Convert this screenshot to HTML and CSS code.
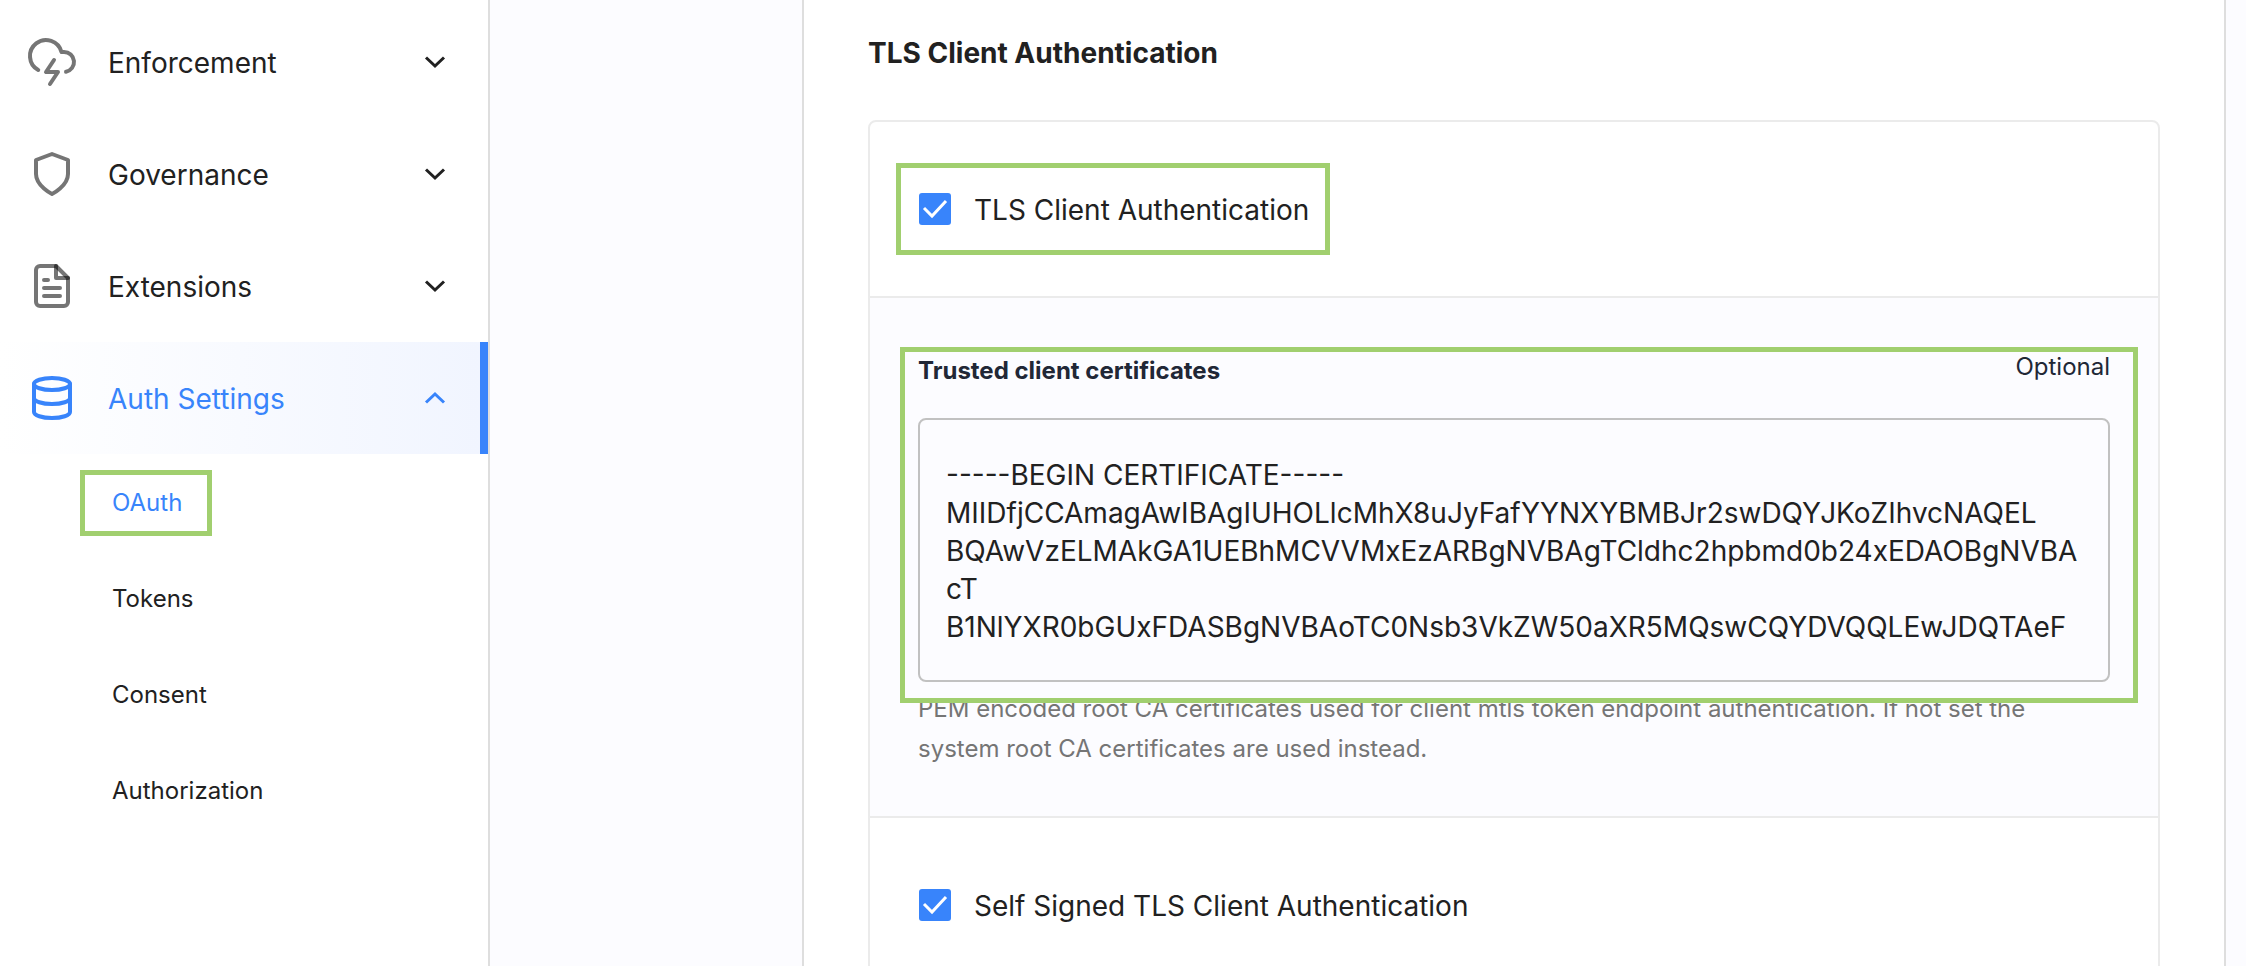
FILE: index.html
```html
<!DOCTYPE html>
<html lang="en">
<head>
<meta charset="utf-8">
<title>Auth Settings</title>
<link rel="stylesheet" href="styles.css">
</head>
<body>
<div class="app">
  <nav class="sidebar" aria-label="Main">
    <button class="nav-item" type="button">
      <svg class="nav-icon" viewBox="0 0 24 24"><path d="M19 16.900A5 5 0 0 0 18 7h-1.260a8 8 0 1 0-11.620 9"/><path d="M13 11l-4 6h6l-4 6"/></svg>
      <span class="nav-label">Enforcement</span>
      <svg class="chevron" viewBox="0 0 20 12"><path d="M1 1.500 10 10l9-8.500"/></svg>
    </button>
    <button class="nav-item" type="button">
      <svg class="nav-icon" viewBox="0 0 24 24"><path d="M12 22s8-4 8-10V5l-8-3-8 3v7c0 6 8 10 8 10z"/></svg>
      <span class="nav-label">Governance</span>
      <svg class="chevron" viewBox="0 0 20 12"><path d="M1 1.500 10 10l9-8.500"/></svg>
    </button>
    <button class="nav-item" type="button">
      <svg class="nav-icon" viewBox="0 0 24 24"><path d="M14 2H6a2 2 0 0 0-2 2v16a2 2 0 0 0 2 2h12a2 2 0 0 0 2-2V8z"/><path d="M14 2v6h6"/><path d="M16 13H8M16 17H8M10 9H8"/></svg>
      <span class="nav-label">Extensions</span>
      <svg class="chevron" viewBox="0 0 20 12"><path d="M1 1.500 10 10l9-8.500"/></svg>
    </button>
    <button class="nav-item nav-item-active" type="button" aria-expanded="true">
      <svg class="nav-icon" viewBox="0 0 24 24"><ellipse cx="12" cy="5" rx="9" ry="3"/><path d="M21 12c0 1.660-4 3-9 3s-9-1.340-9-3M3 5v14c0 1.660 4 3 9 3s9-1.340 9-3V5"/></svg>
      <span class="nav-label">Auth Settings</span>
      <svg class="chevron" viewBox="0 0 20 12"><path d="M1 10.500 10 2l9 8.500"/></svg>
    </button>
    <ul class="subnav">
      <li><a class="subnav-link subnav-link-active" href="#oauth">OAuth</a></li>
      <li><a class="subnav-link" href="#tokens">Tokens</a></li>
      <li><a class="subnav-link" href="#consent">Consent</a></li>
      <li><a class="subnav-link" href="#authorization">Authorization</a></li>
    </ul>
  </nav>
  <main class="content">
    <h2 class="section-title">TLS Client Authentication</h2>
    <section class="card">
      <div class="card-row">
        <label class="check check-marked"><input class="check-box" type="checkbox" checked><span class="check-text">TLS Client Authentication</span></label>
      </div>
      <div class="card-row card-row-field">
        <div class="field">
          <div class="field-head">
            <label class="field-label" for="certs">Trusted client certificates</label>
            <span class="field-optional">Optional</span>
          </div>
          <textarea class="field-input" id="certs" rows="5" spellcheck="false" aria-describedby="certs-help">-----BEGIN CERTIFICATE-----
MIIDfjCCAmagAwIBAgIUHOLlcMhX8uJyFafYYNXYBMBJr2swDQYJKoZIhvcNAQEL
BQAwVzELMAkGA1UEBhMCVVMxEzARBgNVBAgTCldhc2hpbmd0b24xEDAOBgNVBAcT
B1NlYXR0bGUxFDASBgNVBAoTC0Nsb3VkZW50aXR5MQswCQYDVQQLEwJDQTAeF</textarea>
          <p class="field-help" id="certs-help">PEM encoded root CA certificates used for client mtls token endpoint authentication. If not set the system root CA certificates are used instead.</p>
        </div>
      </div>
      <div class="card-row">
        <label class="check"><input class="check-box" type="checkbox" checked><span class="check-text">Self Signed TLS Client Authentication</span></label>
      </div>
    </section>
  </main>
</div>
</body>
</html>
```
FILE: styles.css
```css
* {
  box-sizing: border-box;
}

body {
  margin: 0;
  background: #fcfcff;
  color: #212121;
  font-family: Inter, "Liberation Sans", sans-serif;
  font-size: 28px;
}

.app {
  display: flex;
  height: 100vh;
  overflow: hidden;
}

.sidebar {
  flex: 0 0 490px;
  padding-top: 6px;
  background: #fff;
  border-right: 2px solid #dedede;
}

.nav-item {
  display: flex;
  align-items: center;
  width: 100%;
  height: 112px;
  padding: 0 43px 0 28px;
  border: 0;
  background: none;
  color: inherit;
  font: inherit;
  text-align: left;
}

.nav-item-active {
  padding-right: 35px;
  border-right: 8px solid #3884fb;
  background: linear-gradient(to right, #fff, #f1f5ff);
  color: #3884fb;
}

.nav-icon {
  width: 48px;
  height: 48px;
  overflow: visible;
  fill: none;
  stroke: rgba(0, 0, 0, 0.54);
  stroke-width: 2;
  stroke-linecap: round;
  stroke-linejoin: round;
}

.nav-item-active .nav-icon {
  stroke: #3884fb;
}

.nav-label {
  flex: 1;
  margin-left: 32px;
  padding-top: 2px;
}

.chevron {
  width: 20px;
  height: 12px;
  overflow: visible;
  fill: none;
  stroke: currentColor;
  stroke-width: 3;
}

.subnav {
  margin: 0;
  padding: 1px 0 0;
  list-style: none;
  font-size: 24px;
}

.subnav li {
  display: flex;
  align-items: center;
  height: 96px;
  padding-left: 80px;
}

.subnav-link {
  padding: 16px 32px;
  color: inherit;
  line-height: 34px;
  text-decoration: none;
}

.subnav-link-active {
  padding: 11px 25px 11px 27px;
  border: 5px solid #a1cf6f;
  color: #3884fb;
}

.content {
  flex: 1;
  min-width: 0;
  margin: 0 20px 0 312px;
  padding: 33px 64px 0;
  background: #fff;
  border: solid #dedede;
  border-width: 0 2px;
}

.section-title {
  margin: 0 0 47px;
  font-size: 28px;
  font-weight: 700;
  line-height: 40px;
}

.card {
  border: 2px solid #ebebeb;
  border-radius: 8px;
}

.card-row {
  display: flex;
  align-items: center;
  min-height: 174px;
  padding: 0 49px;
}

.card-row-field {
  padding: 49px 20px 47px 30px;
  background: #fcfcff;
  border: solid #ebebeb;
  border-width: 2px 0;
}

.check {
  display: flex;
  align-items: center;
  gap: 23px;
}

.check-marked {
  margin-left: -23px;
  padding: 24px 16px 24px 18px;
  border: 5px solid #a1cf6f;
}

.check-text {
  padding-top: 2px;
  line-height: 32px;
}

.check-box {
  flex: none;
  width: 32px;
  height: 32px;
  margin: 0;
  appearance: none;
  border-radius: 3px;
  background: #3884fb url("data:image/svg+xml,%3Csvg xmlns='http://www.w3.org/2000/svg' viewBox='0 0 32 32'%3E%3Cpath d='M5 15l8 8L27 8' fill='none' stroke='white' stroke-width='3'/%3E%3C/svg%3E");
}

.field {
  position: relative;
  flex: 1;
  min-width: 0;
  padding: 5px 28px 0 18px;
}

.field::after {
  content: "";
  position: absolute;
  inset: 0 0 66px;
  border: 5px solid #a1cf6f;
  pointer-events: none;
}

.field-head {
  display: flex;
  justify-content: space-between;
  height: 66px;
  color: #212736;
  font-size: 24px;
}

.field-label {
  padding-top: 4px;
  font-weight: 700;
  line-height: 30px;
}

.field-optional {
  line-height: 30px;
}

.field-input {
  display: block;
  width: 100%;
  padding: 36px 26px 34px;
  border: 2px solid #c1c1c1;
  border-radius: 8px;
  background: transparent;
  color: inherit;
  font: inherit;
  line-height: 38px;
  resize: none;
  overflow: hidden;
}

.field-help {
  margin: 7px 0 0;
  color: #757575;
  font-size: 24px;
  line-height: 40px;
}
```
